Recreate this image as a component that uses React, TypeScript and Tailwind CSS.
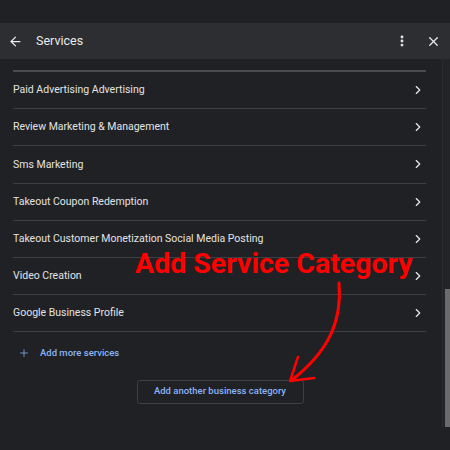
import { ArrowLeft, ChevronRight, EllipsisVertical, Plus, X } from 'lucide-react';

const services = [
  'Paid Advertising Advertising',
  'Review Marketing & Management',
  'Sms Marketing',
  'Takeout Coupon Redemption',
  'Takeout Customer Monetization Social Media Posting',
  'Video Creation',
  'Google Business Profile',
];

export default function App() {
  return (
    <div className="relative w-[450px] h-[450px] overflow-hidden bg-[#202124] text-[#e8eaed]" style={{ fontFamily: 'Roboto, "Liberation Sans", sans-serif' }}>
      <div className="h-[23px]" />
      <div className="h-[36px] bg-[#2d2e31] flex items-center pl-[8px] pr-[9px]">
        <ArrowLeft className="w-[15px] h-[15px] text-[#e8eaed]" strokeWidth={2} />
        <span className="ml-[13px] text-[12.5px] text-[#e8eaed]">Services</span>
        <div className="flex-1" />
        <EllipsisVertical className="w-[14px] h-[14px] text-[#e8eaed]" strokeWidth={3} />
        <X className="ml-[17px] w-[15px] h-[15px] text-[#e8eaed]" strokeWidth={2} />
      </div>
      <div className="flex h-[368px]">
        <div className="flex-1 pl-[13px] pr-[16px]">
          <div className="h-[11px]" />
          <div className="h-[2px] bg-[#4a4b4e]" />
          {services.map((s) => (
            <div key={s} className="h-[37.2px] flex items-center justify-between border-b border-[#3c4043]">
              <span className="text-[10.5px] text-[#e3e3e3]">{s}</span>
              <ChevronRight className="w-[14px] h-[14px] text-[#e8eaed] mr-[1px]" strokeWidth={2} />
            </div>
          ))}
          <div className="flex items-center mt-[14px] ml-[5px] text-[#8ab4f8]">
            <Plus className="w-[12px] h-[12px]" strokeWidth={1.5} />
            <span className="ml-[10px] text-[9.5px] font-medium">Add more services</span>
          </div>
          <div className="flex justify-center mt-[19px] pl-[1px]">
            <div className="w-[167px] h-[24px] border border-[#3c4043] rounded-[3px] flex items-center justify-center text-[9.5px] font-medium text-[#8ab4f8]">
              Add another business category
            </div>
          </div>
        </div>
        <div className="w-[8px] border-l border-[#2a2b2e] bg-[#232427] flex flex-col justify-end">
          <div className="h-[138px] bg-[#6b6b6d] ml-[2px]" />
        </div>
      </div>
      <div
        className="absolute left-[135px] top-[250px] text-[28.5px] leading-none font-bold text-[#ff0000]"
        style={{ fontFamily: 'Roboto, "Liberation Sans", sans-serif' }}
      >
        Add Service Category
      </div>
      <svg className="absolute left-0 top-0 pointer-events-none" width="450" height="450" viewBox="0 0 450 450">
        <path d="M339 283 C342 320 330 350 292 380" fill="none" stroke="#ff0000" strokeWidth="3" strokeLinecap="round" />
        <path d="M298 357 L290 381 L314 378" fill="none" stroke="#ff0000" strokeWidth="2.5" strokeLinecap="round" strokeLinejoin="round" />
      </svg>
    </div>
  );
}
